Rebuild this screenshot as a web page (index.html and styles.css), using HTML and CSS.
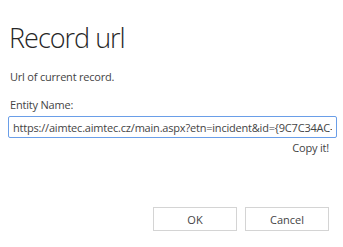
FILE: index.html
```html
<!DOCTYPE html>
<html>
<head>
<meta charset="utf-8">
<link rel="stylesheet" href="styles.css">
</head>
<body>
<div class="dialog">
  <h1 class="title">Record url</h1>
  <p class="desc">Url of current record.</p>
  <label class="label" for="url">Entity Name:</label>
  <input class="field" id="url" type="text" readonly value="https://aimtec.aimtec.cz/main.aspx?etn=incident&amp;id={9C7C34AC-1234-E711-80E5-005056B60D0A}&amp;pagetype=entityrecord">
  <div class="copy-row"><a class="copy">Copy it!</a></div>
  <div class="footer">
    <button class="btn">OK</button>
    <button class="btn">Cancel</button>
  </div>
</div>
</body>
</html>
```
FILE: styles.css
```css
html, body {
  margin: 0;
  padding: 0;
  background: #ffffff;
}
body {
  width: 343px;
  height: 247px;
  overflow: hidden;
  font-family: "Segoe UI", "Open Sans", "Noto Sans", sans-serif;
  color: #444444;
}
.dialog {
  display: flex;
  flex-direction: column;
  padding: 0 6px 0 8px;
}
.title {
  margin: 20px 0 0 1px;
  font-size: 27px;
  font-weight: 300;
  line-height: 36px;
  color: #262626;
  letter-spacing: -1px;
}
.desc {
  margin: 13px 0 0 2px;
  font-size: 11px;
  line-height: 16px;
  color: #444444;
  letter-spacing: -0.2px;
}
.label {
  margin: 12px 0 0 2px;
  font-size: 11px;
  line-height: 16px;
  color: #444444;
  letter-spacing: -0.2px;
}
.field {
  box-sizing: border-box;
  width: 329px;
  height: 22px;
  margin: 3px 0 0 0;
  padding: 0 4px;
  border: 1px solid #6a9ee8;
  border-radius: 2px;
  font-family: inherit;
  font-size: 11px;
  color: #444444;
  outline: none;
  background: #ffffff;
  letter-spacing: -0.2px;
}
.copy-row {
  display: flex;
  justify-content: flex-end;
  margin: 2px 8px 0 0;
}
.copy {
  font-size: 11px;
  line-height: 16px;
  color: #444444;
  letter-spacing: -0.2px;
}
.footer {
  display: flex;
  justify-content: flex-end;
  gap: 8px;
  margin: 51px 8px 0 0;
}
.btn {
  box-sizing: border-box;
  width: 84px;
  height: 24px;
  border: 1px solid #d4d4d4;
  background: #ffffff;
  font-family: inherit;
  font-size: 11px;
  color: #444444;
  padding: 0;
}
```
